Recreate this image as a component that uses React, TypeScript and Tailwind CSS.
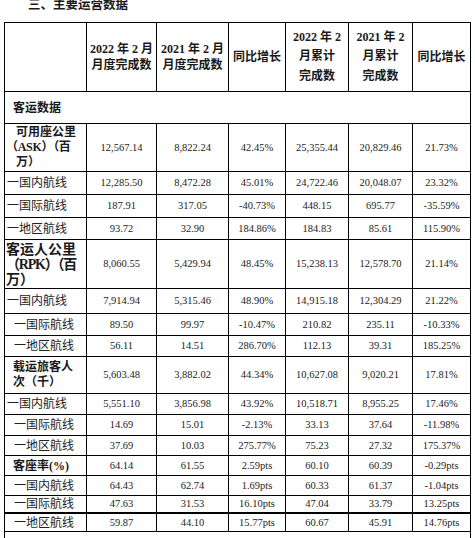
import React from "react";

const cell = "border border-black text-center align-middle p-0";
const num = "text-[10.5px] text-[#222]";

type RowProps = {
  label: React.ReactNode;
  values: string[];
  h: string;
  top?: string;
};

const Row = ({ label, values, h, top = "" }: RowProps) => (
  <tr className={h}>
    <td className={`border border-black align-middle p-0 text-left ${top}`}>{label}</td>
    {values.map((v, i) => (
      <td key={i} className={`${cell} ${num} ${top}`}>
        {v}
      </td>
    ))}
  </tr>
);

// 一国内航线 style sub row label
const Sub = ({ text, indent }: { text: string; indent?: boolean }) => (
  <div className={`text-[12px] leading-none text-[#222] whitespace-nowrap ${indent ? "pl-[9px]" : "pl-[2px]"}`}>
    一{text}
  </div>
);

const App = () => {
  return (
    <div className="w-[475px] h-[538px] overflow-hidden bg-white font-['Liberation_Serif','Noto_Sans_CJK_SC',serif] text-[#1a1a1a]">
      <div className="-mt-[3px] h-[25px] pl-[28px] text-[12.5px] leading-[13px] font-bold font-['Noto_Sans_CJK_SC',sans-serif]">
        三、主要运营数据
      </div>
      <table className="table-fixed border-collapse w-[466px] ml-[4px]">
        <colgroup>
          <col className="w-[82px]" />
          <col className="w-[70px]" />
          <col className="w-[72px]" />
          <col className="w-[57px]" />
          <col className="w-[63px]" />
          <col className="w-[64px]" />
          <col className="w-[58px]" />
        </colgroup>
        <tbody>
          <tr className="h-[69px] text-[12px] font-bold">
            <td className={cell}></td>
            <td className={`${cell} leading-[16px]`}>
              2022 年 2 月<br />月度完成数
            </td>
            <td className={`${cell} leading-[16px]`}>
              2021 年 2 月<br />月度完成数
            </td>
            <td className={`${cell} leading-[16px]`}>同比增长</td>
            <td className={`${cell} leading-[19.5px]`}>
              2022 年 2<br />月累计<br />完成数
            </td>
            <td className={`${cell} leading-[19.5px]`}>
              2021 年 2<br />月累计<br />完成数
            </td>
            <td className={`${cell} leading-[16px]`}>同比增长</td>
          </tr>
          <tr className="h-[32px]">
            <td colSpan={7} className="border border-black align-middle p-0 pl-[8px] text-[12px] font-bold">
              客运数据
            </td>
          </tr>

          <Row
            h="h-[48px]"
            label={
              <div className="text-[12px] leading-[15px] font-bold whitespace-nowrap">
                <div className="pl-[11px]">可用座公里</div>
                <div className="pl-[1px] tracking-[-0.3px]">（ASK）（百</div>
                <div className="pl-[11px]">万）</div>
              </div>
            }
            values={["12,567.14", "8,822.24", "42.45%", "25,355.44", "20,829.46", "21.73%"]}
          />
          <Row h="h-[23px]" label={<Sub text="国内航线" />} values={["12,285.50", "8,472.28", "45.01%", "24,722.46", "20,048.07", "23.32%"]} />
          <Row h="h-[23px]" label={<Sub text="国际航线" />} values={["187.91", "317.05", "-40.73%", "448.15", "695.77", "-35.59%"]} />
          <Row h="h-[22px]" label={<Sub text="地区航线" />} values={["93.72", "32.90", "184.86%", "184.83", "85.61", "115.90%"]} />

          <Row
            h="h-[49px]"
            label={
              <div className="text-[14px] leading-[15px] font-bold whitespace-nowrap pl-[1px]">
                <div>客运人公里</div>
                <div className="tracking-[-1.2px]">（RPK）（百</div>
                <div>万）</div>
              </div>
            }
            values={["8,060.55", "5,429.94", "48.45%", "15,238.13", "12,578.70", "21.14%"]}
          />
          <Row h="h-[25px]" label={<Sub text="国内航线" />} values={["7,914.94", "5,315.46", "48.90%", "14,915.18", "12,304.29", "21.22%"]} />
          <Row h="h-[22px]" label={<Sub text="国际航线" indent />} values={["89.50", "99.97", "-10.47%", "210.82", "235.11", "-10.33%"]} />
          <Row h="h-[21px]" label={<Sub text="地区航线" indent />} values={["56.11", "14.51", "286.70%", "112.13", "39.31", "185.25%"]} />

          <Row
            h="h-[37px]"
            label={
              <div className="text-[12px] leading-[15px] font-bold whitespace-nowrap pl-[8px]">
                <div>载运旅客人</div>
                <div>次（千）</div>
              </div>
            }
            values={["5,603.48", "3,882.02", "44.34%", "10,627.08", "9,020.21", "17.81%"]}
          />
          <Row h="h-[21px]" label={<Sub text="国内航线" />} values={["5,551.10", "3,856.98", "43.92%", "10,518.71", "8,955.25", "17.46%"]} />
          <Row h="h-[21px]" label={<Sub text="国际航线" indent />} values={["14.69", "15.01", "-2.13%", "33.13", "37.64", "-11.98%"]} />
          <Row h="h-[20px]" label={<Sub text="地区航线" indent />} values={["37.69", "10.03", "275.77%", "75.23", "27.32", "175.37%"]} />

          <Row
            h="h-[20px]"
            label={
              <div className="text-[12px] leading-none font-bold whitespace-nowrap pl-[8px]">
                客座率(%)
              </div>
            }
            values={["64.14", "61.55", "2.59pts", "60.10", "60.39", "-0.29pts"]}
          />
          <Row h="h-[20px]" label={<Sub text="国内航线" indent />} values={["64.43", "62.74", "1.69pts", "60.33", "61.37", "-1.04pts"]} />
          <Row h="h-[17px]" label={<Sub text="国际航线" indent />} values={["47.63", "31.53", "16.10pts", "47.04", "33.79", "13.25pts"]} />
          <Row
            h="h-[19px]"
            top="border-t-2"
            label={<Sub text="地区航线" indent />}
            values={["59.87", "44.10", "15.77pts", "60.67", "45.91", "14.76pts"]}
          />
          <tr className="h-[40px]">
            <td colSpan={7} className="border border-black p-0"></td>
          </tr>
        </tbody>
      </table>
    </div>
  );
};

export default App;
